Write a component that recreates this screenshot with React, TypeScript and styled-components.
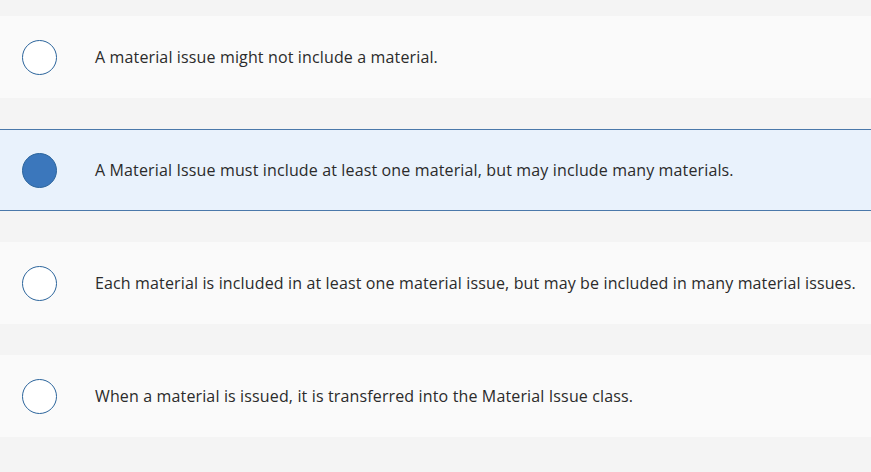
import React from "react";
import styled, { createGlobalStyle } from "styled-components";

const Global = createGlobalStyle`
  html, body { margin: 0; padding: 0; background: #f4f4f4; }
  body { font-family: "Open Sans", "Lato", sans-serif; }
`;

const List = styled.div`
  display: flex;
  flex-direction: column;
  gap: 31px;
  padding-top: 16px;
`;

const Option = styled.div<{ $selected?: boolean }>`
  display: flex;
  align-items: center;
  height: 82px;
  box-sizing: border-box;
  background: ${(p) => (p.$selected ? "#e9f2fc" : "#fafafa")};
  border-top: 1px solid ${(p) => (p.$selected ? "#4a78aa" : "transparent")};
  border-bottom: 1px solid ${(p) => (p.$selected ? "#4a78aa" : "transparent")};
  padding-left: 22px;
`;

const Radio = styled.span<{ $selected?: boolean }>`
  width: 35px;
  height: 35px;
  box-sizing: border-box;
  border-radius: 50%;
  border: 1.5px solid #2c659c;
  background: ${(p) => (p.$selected ? "#3b77bc" : "#ffffff")};
  flex-shrink: 0;
`;

const Label = styled.span`
  margin-left: 38px;
  font-size: 16px;
  color: #2b2b2b;
  letter-spacing: 0.14px;
`;

const options = [
  "A material issue might not include a material.",
  "A Material Issue must include at least one material, but may include many materials.",
  "Each material is included in at least one material issue, but may be included in many material issues.",
  "When a material is issued, it is transferred into the Material Issue class.",
];

export default function App() {
  return (
    <>
      <Global />
      <List>
        {options.map((t, i) => (
          <Option key={i} $selected={i === 1}>
            <Radio $selected={i === 1} />
            <Label>{t}</Label>
          </Option>
        ))}
      </List>
    </>
  );
}
